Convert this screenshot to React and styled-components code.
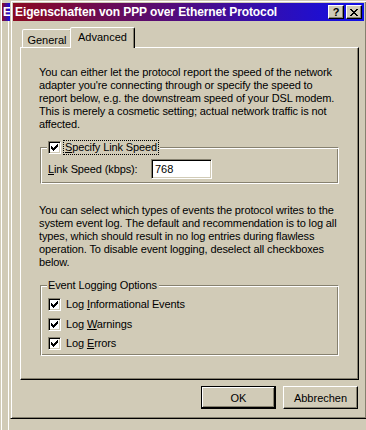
import React from 'react'
import styled, { createGlobalStyle } from 'styled-components'

const c = {
  face: '#d1cbb7',
  light: '#ffffff',
  shadow: '#86816f',
  dark: '#000000',
  caption: 'linear-gradient(90deg, #8b0a20 0%, #1010e8 100%)',
}

const GlobalStyle = createGlobalStyle`
  html, body {
    margin: 0;
    padding: 0;
    background: ${c.face};
  }
  body {
    font-family: 'Liberation Sans', Arial, sans-serif;
    font-size: 11px;
    color: #000;
  }
`

const Desktop = styled.div`
  position: relative;
  width: 366px;
  height: 430px;
  overflow: hidden;
  background: ${c.face};
`

/* the window behind the dialog, only its left edge shows */
const BackWindow = styled.div`
  position: absolute;
  left: 1px;
  top: 0;
  width: 8px;
  height: 440px;
  padding-top: 3px;
  border-left: 1px solid ${c.light};
`
const BackTitle = styled.div`
  height: 18px;
  line-height: 18px;
  padding-left: 1px;
  background: ${c.caption};
  color: #fff;
  font-weight: bold;
  font-size: 12px;
  overflow: hidden;
`
const BackBody = styled.div`
  margin-left: 6px;
  height: 420px;
  border-left: 1px solid ${c.light};
`

const Dialog = styled.div`
  position: absolute;
  left: 10px;
  top: 0;
  width: 357px;
  height: 419px;
  box-sizing: border-box;
  padding: 2px;
  background: ${c.face};
  border: 1px solid;
  border-color: ${c.face} ${c.dark} ${c.dark} ${c.face};
  box-shadow: inset 1px 1px ${c.light}, inset -1px -1px ${c.shadow};
  display: flex;
  flex-direction: column;
`

const TitleBar = styled.div`
  height: 18px;
  display: flex;
  align-items: center;
  padding: 0 2px;
  background: ${c.caption};
`
const TitleText = styled.div`
  flex: 1;
  color: #fff;
  font-weight: bold;
  font-size: 12px;
  letter-spacing: -0.1px;
  white-space: nowrap;
  overflow: hidden;
`
const CaptionButton = styled.div`
  width: 16px;
  height: 14px;
  box-sizing: border-box;
  margin-left: ${(p) => (p.$gap ? '2px' : '0')};
  background: ${c.face};
  border: 1px solid;
  border-color: ${c.light} ${c.dark} ${c.dark} ${c.light};
  box-shadow: inset -1px -1px ${c.shadow};
  display: flex;
  align-items: center;
  justify-content: center;
  font-weight: bold;
  font-size: 11px;
  line-height: 12px;
  svg {
    display: block;
    shape-rendering: crispEdges;
  }
`

const Body = styled.div`
  flex: 1;
  padding: 6px 5px 0 7px;
  display: flex;
  flex-direction: column;
`

const TabRow = styled.div`
  display: flex;
  align-items: flex-end;
  height: 21px;
  padding-left: 2px;
  margin-bottom: -1px;
  position: relative;
  z-index: 1;
`
const Tab = styled.div`
  box-sizing: border-box;
  width: ${(p) => (p.$active ? '65px' : '50px')};
  height: ${(p) => (p.$active ? '21px' : '18px')};
  margin-left: ${(p) => (p.$active ? '-2px' : '0')};
  margin-bottom: ${(p) => (p.$active ? '0' : '1px')};
  padding-top: ${(p) => (p.$active ? '3px' : '4px')};
  text-align: center;
  line-height: 13px;
  background: ${c.face};
  border: 1px solid;
  border-bottom: none;
  border-color: ${c.light} ${c.dark} transparent ${c.light};
  border-radius: 2px 2px 0 0;
  box-shadow: inset -1px 0 ${c.shadow};
  position: relative;
  z-index: ${(p) => (p.$active ? 2 : 1)};
`

const Panel = styled.div`
  box-sizing: border-box;
  width: 339px;
  height: 333px;
  padding: 18px 0 0 18px;
  border: 1px solid;
  border-color: ${c.light} ${c.dark} ${c.dark} ${c.light};
  box-shadow: inset -1px -1px ${c.shadow};
`

const Para = styled.p`
  margin: ${(p) => p.$top || 0}px 0 0 0;
  width: 302px;
  line-height: 13px;
  letter-spacing: -0.12px;
`

const Group = styled.fieldset`
  margin: ${(p) => p.$top || 0}px 0 0 1px;
  padding: ${(p) => p.$pad};
  min-width: 0;
  width: 299px;
  box-sizing: border-box;
  border: 1px solid;
  border-color: ${c.shadow} ${c.light} ${c.light} ${c.shadow};
  box-shadow: inset 1px 1px ${c.light}, inset -1px -1px ${c.shadow};
`
const Legend = styled.legend`
  padding: 0 2px 0 1px;
  line-height: 13px;
  background: ${c.face};
  display: flex;
  align-items: center;
  letter-spacing: -0.12px;
`
const FocusLabel = styled.span`
  margin-left: 3px;
  padding: 0 1px;
  outline: 1px dotted #000;
  outline-offset: 0;
`

const SpeedRow = styled.div`
  display: grid;
  grid-template-columns: 103px 61px;
  align-items: center;
  padding-left: 1px;
  letter-spacing: -0.12px;
`
const Edit = styled.input`
  width: 61px;
  height: 20px;
  box-sizing: border-box;
  margin: 0;
  padding: 0 3px;
  font: 11px 'Liberation Sans', Arial, sans-serif;
  color: #000;
  background: #fff;
  border: 1px solid;
  border-color: ${c.shadow} ${c.light} ${c.light} ${c.shadow};
  box-shadow: inset 1px 1px ${c.dark}, inset -1px -1px ${c.face};
  outline: none;
`

const CheckList = styled.div`
  display: flex;
  flex-direction: column;
  gap: 6.5px;
  padding-left: 1px;
`
const CheckRow = styled.div`
  display: flex;
  align-items: center;
  height: 13px;
  line-height: 13px;
  letter-spacing: -0.12px;
  span + span {
    margin-left: 5px;
  }
`
const Box = styled.span`
  display: block;
  flex: none;
  width: 13px;
  height: 13px;
  box-sizing: border-box;
  background: #fff;
  border: 1px solid;
  border-color: ${c.shadow} ${c.light} ${c.light} ${c.shadow};
  box-shadow: inset 1px 1px ${c.dark}, inset -1px -1px ${c.face};
  svg {
    display: block;
    shape-rendering: crispEdges;
  }
`

const Buttons = styled.div`
  display: flex;
  justify-content: flex-end;
  gap: 7px;
  margin: 6px 1px 0 0;
`
const PushButton = styled.div`
  width: 75px;
  height: 23px;
  box-sizing: border-box;
  display: flex;
  align-items: center;
  justify-content: center;
  background: ${c.face};
  border: 1px solid;
  border-color: ${(p) =>
    p.$default
      ? c.dark
      : `${c.light} ${c.dark} ${c.dark} ${c.light}`};
  box-shadow: ${(p) =>
    p.$default
      ? `inset -1px -1px ${c.dark}, inset 1px 1px ${c.light}, inset -2px -2px ${c.shadow}`
      : `inset -1px -1px ${c.shadow}`};
`

const checkCols = [
  [2, 4], [3, 5], [4, 6], [5, 5], [6, 4], [7, 3], [8, 2],
]
const CheckBox = () => (
  <Box>
    <svg width='11' height='11' viewBox='0 0 11 11'>
      {checkCols.map(([x, y]) => (
        <rect key={x} x={x} y={y} width='1' height='3' fill='#000' />
      ))}
    </svg>
  </Box>
)

const closeRects = [
  [0, 0, 2], [6, 0, 2], [1, 1, 2], [5, 1, 2], [2, 2, 4], [3, 3, 2],
  [2, 4, 4], [1, 5, 2], [5, 5, 2], [0, 6, 2], [6, 6, 2],
]
const CloseGlyph = () => (
  <svg width='8' height='7' viewBox='0 0 8 7'>
    {closeRects.map(([x, y, w], i) => (
      <rect key={i} x={x} y={y} width={w} height='1' fill='#000' />
    ))}
  </svg>
)

const LogOption = ({ children }) => (
  <CheckRow>
    <CheckBox />
    <span>{children}</span>
  </CheckRow>
)

export default function App() {
  return (
    <>
      <GlobalStyle />
      <Desktop>
        <BackWindow>
          <BackTitle>E</BackTitle>
          <BackBody />
        </BackWindow>
        <Dialog>
          <TitleBar>
            <TitleText>Eigenschaften von PPP over Ethernet Protocol</TitleText>
            <CaptionButton>?</CaptionButton>
            <CaptionButton $gap>
              <CloseGlyph />
            </CaptionButton>
          </TitleBar>
          <Body>
            <TabRow>
              <Tab>General</Tab>
              <Tab $active>Advanced</Tab>
            </TabRow>
            <Panel>
              <Para>
                You can either let the protocol report the speed of the network
                adapter you're connecting through or specify the speed to
                report below, e.g. the downstream speed of your DSL modem.
                This is merely a cosmetic setting; actual network traffic is
                not affected.
              </Para>
              <Group $top={10} $pad='5px 6px 4px'>
                <Legend>
                  <CheckBox />
                  <FocusLabel>
                    <u>S</u>pecify Link Speed
                  </FocusLabel>
                </Legend>
                <SpeedRow>
                  <span>
                    <u>L</u>ink Speed (kbps):
                  </span>
                  <Edit defaultValue='768' readOnly />
                </SpeedRow>
              </Group>
              <Para $top={20}>
                You can select which types of events the protocol writes to the
                system event log. The default and recommendation is to log all
                types, which should result in no log entries during flawless
                operation. To disable event logging, deselect all checkboxes
                below.
              </Para>
              <Group $top={10} $pad='6px 6px 5px'>
                <Legend>Event Logging Options</Legend>
                <CheckList>
                  <LogOption>
                    Log <u>I</u>nformational Events
                  </LogOption>
                  <LogOption>
                    Log <u>W</u>arnings
                  </LogOption>
                  <LogOption>
                    Log <u>E</u>rrors
                  </LogOption>
                </CheckList>
              </Group>
            </Panel>
            <Buttons>
              <PushButton $default>OK</PushButton>
              <PushButton>Abbrechen</PushButton>
            </Buttons>
          </Body>
        </Dialog>
      </Desktop>
    </>
  )
}
